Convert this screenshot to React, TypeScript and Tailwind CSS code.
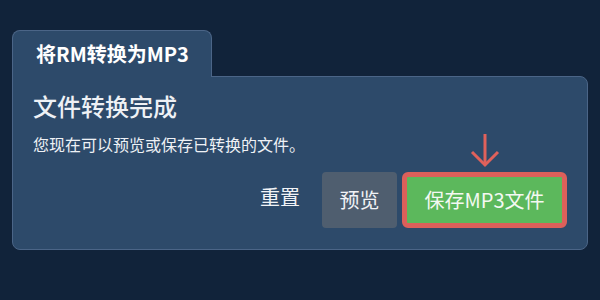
export default function App() {
  return (
    <div
      className="w-[600px] h-[300px] bg-[#11233a] pt-[30px] px-[12px]"
      style={{ fontFamily: '"Noto Sans CJK SC", "Noto Sans", sans-serif' }}
    >
      {/* Tab */}
      <div className="relative z-10 -mb-px w-[200px] h-[47px] bg-[#2d4a6a] border border-b-0 border-[#4b6587] rounded-t-lg flex items-center pl-[23px]">
        <span className="text-[20px] font-bold text-white leading-none">将RM转换为MP3</span>
      </div>

      {/* Panel */}
      <div className="h-[174px] bg-[#2d4a6a] border border-[#4b6587] rounded-b-lg rounded-tr-lg px-[20px] pt-[13px]">
        <h2 className="text-[24px] leading-[32px] font-medium text-[#eef1f5]">文件转换完成</h2>
        <p className="mt-[11px] text-[16px] leading-[22px] text-[#eef1f5]">您现在可以预览或保存已转换的文件。</p>

        <div className="mt-[17px] flex items-center justify-end">
          <button className="mr-[22px] -mt-[6px] text-[20px] leading-none text-[#f1f3f6]">重置</button>
          <button className="w-[75px] h-[56px] rounded bg-[#4f5e6f] text-[20px] text-[#f1f3f6]">预览</button>
          <div className="relative ml-[5px]">
            <svg
              className="absolute left-1/2 -translate-x-1/2 bottom-full mb-[4px]"
              width="32"
              height="35"
              viewBox="0 0 32 35"
              fill="none"
              stroke="#e0615b"
              strokeWidth="3"
            >
              <path d="M16 1 V32" />
              <path d="M3 19 L16 32 L29 19" />
            </svg>
            <button className="w-[165px] h-[56px] rounded-md border-[5px] border-[#dc605a] bg-[#5cb85c] text-[20px] text-[#f4f8f2]">
              保存MP3文件
            </button>
          </div>
        </div>
      </div>
    </div>
  );
}
